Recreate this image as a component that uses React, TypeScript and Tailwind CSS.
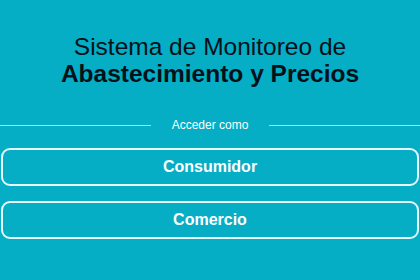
export default function App() {
  return (
    <div
      className="min-h-[280px] bg-[#05adc5] px-px pt-[33px]"
      style={{ fontFamily: '"Liberation Sans", Arial, sans-serif' }}
    >
      <h1 className="text-center text-[24.5px] leading-[27px] text-[#04111a]">
        <span className="block font-normal">Sistema de Monitoreo de</span>
        <span className="block font-bold">Abastecimiento y Precios</span>
      </h1>

      <div className="-mx-px mt-[30px] flex items-center">
        <div className="h-px flex-1 bg-[#a3e6ef]" />
        <span className="px-[21px] text-[12px] leading-4 text-white">Acceder como</span>
        <div className="h-px flex-1 bg-[#a3e6ef]" />
      </div>

      <div className="mt-[15px] flex flex-col gap-[15px]">
        <button className="h-[38px] w-full rounded-[9px] border-2 border-[#e6f9fb] text-[16px] font-bold text-white">
          Consumidor
        </button>
        <button className="h-[38px] w-full rounded-[9px] border-2 border-[#e6f9fb] text-[16px] font-bold text-white">
          Comercio
        </button>
      </div>
    </div>
  )
}
